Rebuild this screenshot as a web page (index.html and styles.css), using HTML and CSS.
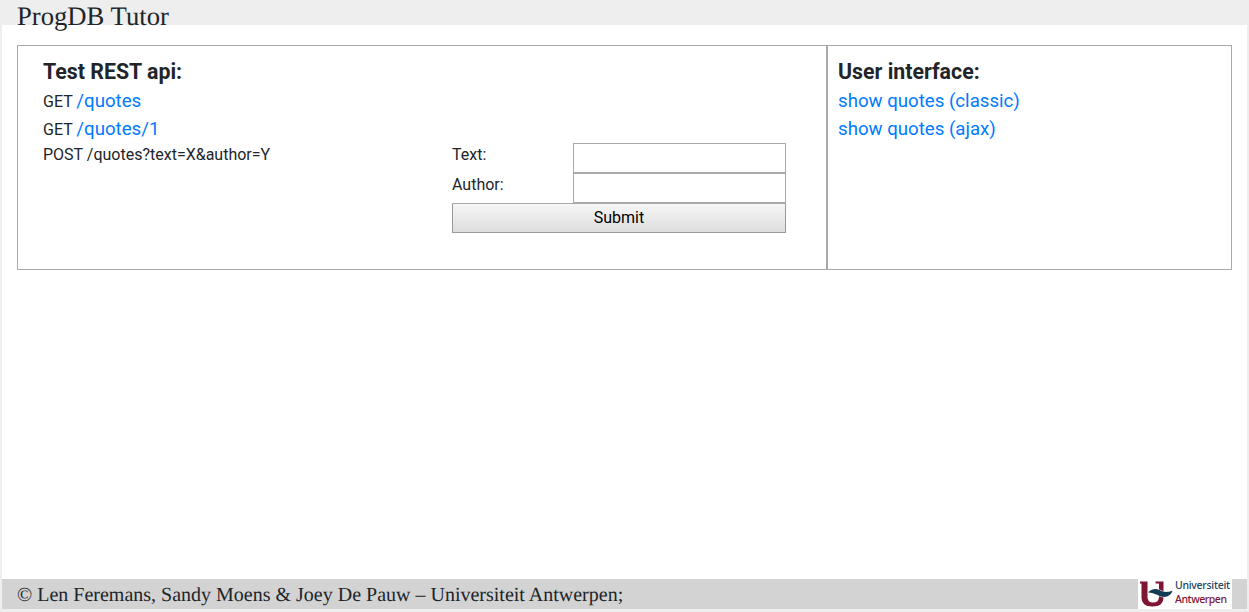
FILE: index.html
```html
<!DOCTYPE html>
<html lang="en">
<head>
<meta charset="utf-8">
<title>ProgDB Tutor</title>
<link rel="stylesheet" href="styles.css">
</head>
<body>
<header class="header"><span class="brand">ProgDB Tutor</span></header>
<main class="content">
  <section class="panel api">
    <h1 class="title">Test REST api:</h1>
    <p class="line">GET <a class="link" href="#">/quotes</a></p>
    <p class="line">GET <a class="link" href="#">/quotes/1</a></p>
    <div class="post">
      <span class="endpoint">POST /quotes?text=X&amp;author=Y</span>
      <form class="form">
        <label class="label" for="text">Text:</label>
        <input class="input" id="text" type="text">
        <label class="label" for="author">Author:</label>
        <input class="input" id="author" type="text">
        <button class="submit" type="button">Submit</button>
      </form>
    </div>
  </section>
  <section class="panel ui">
    <h1 class="title">User interface:</h1>
    <p class="line"><a class="link" href="#">show quotes (classic)</a></p>
    <p class="line"><a class="link" href="#">show quotes (ajax)</a></p>
  </section>
</main>
<footer class="footer">
  <span class="copyright">© Len Feremans, Sandy Moens &amp; Joey De Pauw – Universiteit Antwerpen;</span>
  <svg class="logo" viewBox="0 0 94 30" width="94" height="30">
    <rect width="94" height="30" fill="#fff"/>
    <path d="M2 2.500H9.500V18Q9.500 23.500 15 23.500Q21 23.500 21 18V4.500H17.500V2.500H25.500V18Q25.500 27.500 14.500 27.500Q3.500 27.500 3.500 18V4.500H2Z" fill="#7d1533"/>
    <path d="M10 13.500C13 10 17.500 9 21.500 11C26 13.500 29 13.500 34.500 11.800C33 16.500 29 18.500 24.500 17.800C20 17 16 13.500 10 13.500Z" fill="#123b55" stroke="#fff" stroke-width="1" paint-order="stroke"/>
    <text class="logo-text" x="37" y="10" textLength="55" fill="#24465f">Universiteit</text>
    <text class="logo-text" x="37" y="23.500" textLength="52" fill="#7d1533">Antwerpen</text>
  </svg>
</footer>
</body>
</html>
```
FILE: styles.css
```css
* { box-sizing: border-box; }
body {
  display: flex;
  flex-direction: column;
  height: 612px;
  margin: 0;
  padding: 0 2px 3px;
  background: #eee;
  color: #212529;
  font: 16px/24px Roboto, sans-serif;
}
.header { height: 25px; padding-left: 15px; }
.brand {
  display: block;
  position: relative;
  font: 20pt/33px "Liberation Serif", serif;
  text-rendering: geometricPrecision;
}
.content {
  display: flex;
  flex: 1;
  align-items: flex-start;
  padding: 20px 15px 0;
  background: #fff;
}
.panel { height: 225px; padding-top: 12px; border: 1px solid #a9a9a9; }
.api { width: 810px; padding-left: 25px; }
.ui { flex: 1; padding-left: 10px; }
.title { margin: 0; font-size: 16pt; line-height: 28px; font-weight: 700; }
.line { height: 28px; margin: 0; line-height: 30px; }
.link { color: #007bff; font-size: 14pt; text-decoration: none; }
.post { display: flex; }
.endpoint { width: 409px; padding-top: 1px; }
.form {
  display: grid;
  grid-template-columns: 121px 213px;
  grid-template-rows: 30px 30px 30px;
  margin-top: 1px;
}
.input { width: 213px; height: 30px; margin: 0; border: 1px solid #a9a9a9; background: #fff; }
.submit {
  grid-column: 1 / 3;
  height: 30px;
  padding: 0 0 1px;
  border: 1px solid #999;
  border-top-color: #a9a9a9;
  border-radius: 1px;
  background: linear-gradient(#f6f6f6, #ddd);
  color: #000;
  font: 16px/24px Roboto, sans-serif;
}
.footer {
  display: flex;
  justify-content: space-between;
  height: 30px;
  padding: 0 15px;
  background: #d3d3d3;
}
.copyright {
  font: 15pt/32px "Liberation Serif", serif;
  text-rendering: geometricPrecision;
}
.logo { display: block; }
.logo-text { font: 500 10.5px "Noto Sans", sans-serif; }
```
